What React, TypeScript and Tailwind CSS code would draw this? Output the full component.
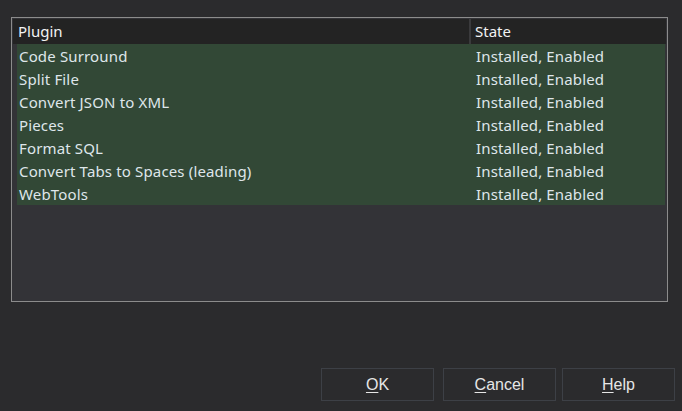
const plugins = [
  'Code Surround',
  'Split File',
  'Convert JSON to XML',
  'Pieces',
  'Format SQL',
  'Convert Tabs to Spaces (leading)',
  'WebTools',
]

function DialogButton({ label, hotkey, className = '' }: { label: string; hotkey: string; className?: string }) {
  return (
    <button
      className={`w-[113px] h-[33px] border border-[#3d4046] bg-[#2b2b2d] text-[#e6e6e6] text-[16px] font-['Liberation_Sans',Arial,sans-serif] ${className}`}
    >
      <span className="underline underline-offset-2">{hotkey}</span>
      {label}
    </button>
  )
}

export default function App() {
  return (
    <div className="w-[682px] h-[411px] bg-[#2b2b2d] flex flex-col font-['Noto_Sans',sans-serif] text-[15px] overflow-hidden">
      <div className="mt-[17px] ml-[11px] w-[657px] h-[285px] border border-[#8c8c8c] bg-[#333337] p-px">
        <div className="flex h-[25px] bg-[#232323]">
          <div className="w-[458px] pl-[5px] text-[#f2f2f2] leading-[25px] border-r-2 border-[#3a3a3c]">Plugin</div>
          <div className="flex-1 pl-[4px] text-[#f2f2f2] leading-[25px]">State</div>
        </div>
        <div className="ml-[4px] mr-px">
          {plugins.map((p) => (
            <div key={p} className="flex h-[23px] bg-[#324836] text-[#dfe6ea] leading-[24px] tracking-[0.15px]">
              <div className="w-[457px] pl-[2px]">{p}</div>
              <div className="flex-1 pl-[2px]">Installed, Enabled</div>
            </div>
          ))}
        </div>
      </div>
      <div className="flex justify-end mt-[66px] mr-[7px]">
        <DialogButton hotkey="O" label="K" className="mr-[9px]" />
        <DialogButton hotkey="C" label="ancel" className="mr-[6px]" />
        <DialogButton hotkey="H" label="elp" />
      </div>
    </div>
  )
}
